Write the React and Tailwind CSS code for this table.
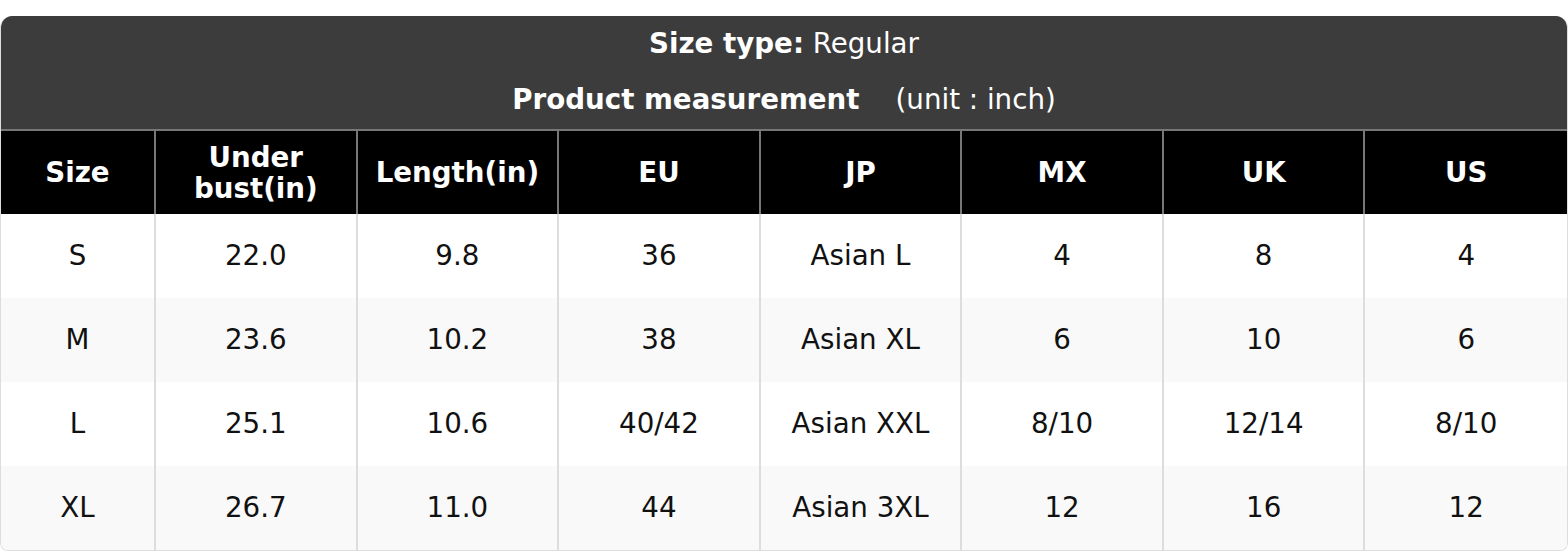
const headers = ["Size", "Under bust(in)", "Length(in)", "EU", "JP", "MX", "UK", "US"];

const rows = [
  ["S", "22.0", "9.8", "36", "Asian L", "4", "8", "4"],
  ["M", "23.6", "10.2", "38", "Asian XL", "6", "10", "6"],
  ["L", "25.1", "10.6", "40/42", "Asian XXL", "8/10", "12/14", "8/10"],
  ["XL", "26.7", "11.0", "44", "Asian 3XL", "12", "16", "12"],
];

const App = () => {
  return (
    <div
      className="w-[1568px] h-[552px] bg-white pt-[16px]"
      style={{ fontFamily: '"DejaVu Sans", Verdana, sans-serif' }}
    >
      <div className="rounded-t-[12px] rounded-b-[8px] overflow-hidden border border-[#dddddd] border-t-0 text-[27.7px] leading-[32px]">
        {/* Title bar */}
        <div className="bg-[#3c3c3c] text-white flex flex-col items-center pt-[12px] pb-[13px] gap-[24px] h-[113px]">
          <p>
            <span className="font-bold">Size type:</span> Regular
          </p>
          <p>
            <span className="font-bold">Product measurement</span>
            <span className="ml-[36px]">(unit : inch)</span>
          </p>
        </div>

        {/* Column headers */}
        <div className="grid grid-cols-[155px_repeat(7,1fr)] bg-black border-t-2 border-[#777777] text-white font-bold leading-[31px]">
          {headers.map((h, i) => (
            <div
              key={h}
              className={`h-[83px] flex items-center justify-center text-center px-2 ${
                i < headers.length - 1 ? "border-r-2 border-[#777777]" : ""
              }`}
            >
              {h === "Under bust(in)" ? (
                <span>
                  Under
                  <br />
                  bust(in)
                </span>
              ) : (
                h
              )}
            </div>
          ))}
        </div>

        {/* Body rows */}
        {rows.map((row, r) => (
          <div
            key={row[0]}
            className={`grid grid-cols-[155px_repeat(7,1fr)] text-[#111111] ${
              r % 2 === 1 ? "bg-[#f9f9f9]" : "bg-white"
            }`}
          >
            {row.map((cell, i) => (
              <div
                key={i}
                className={`h-[84px] flex items-center justify-center ${
                  i < row.length - 1 ? "border-r-2 border-[#dddddd]" : ""
                }`}
              >
                {cell}
              </div>
            ))}
          </div>
        ))}
      </div>
    </div>
  );
};

export default App;
